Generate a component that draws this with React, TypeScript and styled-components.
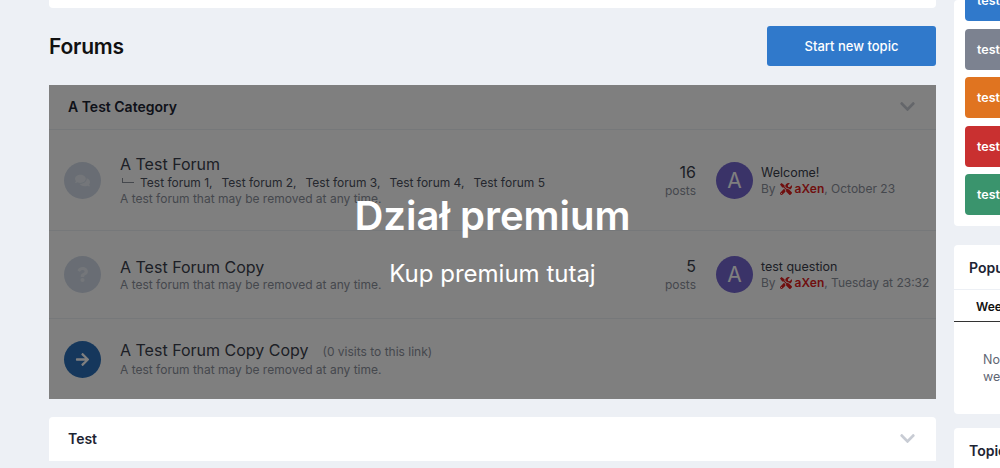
import React from "react";
import styled, { createGlobalStyle } from "styled-components";
import { FaArrowRight, FaChevronDown, FaComments, FaQuestion, FaTools } from "react-icons/fa";

const GlobalStyle = createGlobalStyle`
  html, body {
    margin: 0;
    height: 468px;
    overflow: hidden;
    background: #edf0f5;
    font-family: Inter, "Noto Sans", sans-serif;
    color: #1d2433;
  }
  * { box-sizing: border-box; }
`;

const Page = styled.div`
  display: grid;
  grid-template-columns: 887px 300px;
  column-gap: 18px;
  height: 468px;
  padding-left: 49px;
  overflow: hidden;
`;

const Main = styled.main`
  display: flex;
  flex-direction: column;
`;

const TopCard = styled.div`
  height: 8px;
  background: #fff;
  border-radius: 0 0 4px 4px;
`;

const Heading = styled.div`
  display: flex;
  align-items: center;
  justify-content: space-between;
  height: 77px;
  padding-bottom: 1px;
`;

const PageTitle = styled.h2`
  margin: 0;
  font-size: 21px;
  font-weight: 600;
  letter-spacing: -0.2px;
  color: #111;
`;

const StartButton = styled.button`
  width: 169px;
  height: 40px;
  border: 0;
  border-radius: 3px;
  background: #3079cb;
  color: #fff;
  font: 500 13px Inter, sans-serif;
`;

const Category = styled.section<{ $locked?: boolean }>`
  position: relative;
  background: #fff;
  border-radius: ${(p) => (p.$locked ? "0" : "4px 4px 0 0")};
  margin-bottom: 18px;
`;

const CategoryHeader = styled.div`
  display: flex;
  align-items: center;
  justify-content: space-between;
  height: 45px;
  padding: 0 20px 1px 19px;
  border-bottom: 1px solid #edf0f5;
`;

const CategoryTitle = styled.h3`
  margin: 0;
  font-size: 14px;
  font-weight: 600;
  color: #1d2433;
`;

const Chevron = styled(FaChevronDown)`
  width: 17px;
  height: 17px;
  color: #c8ccd4;
`;

const Row = styled.div<{ $height: number; $last?: boolean }>`
  display: grid;
  grid-template-columns: 36px 1fr 72px 220px;
  align-items: center;
  column-gap: 20px;
  height: ${(p) => p.$height}px;
  padding-left: 15px;
  border-bottom: ${(p) => (p.$last ? "0" : "1px solid #edf0f5")};
`;

const ForumIcon = styled.div<{ $active?: boolean }>`
  display: flex;
  align-items: center;
  justify-content: center;
  width: 37px;
  height: 37px;
  border-radius: 50%;
  background: ${(p) => (p.$active ? "#2a6fb8" : "#d2dbe8")};
  color: ${(p) => (p.$active ? "#fff" : "#e8edf4")};
  font-size: 15px;
`;

const ForumInfo = styled.div`
  display: flex;
  flex-direction: column;
  min-width: 0;
`;

const ForumTitle = styled.div`
  display: flex;
  align-items: baseline;
  font-size: 16px;
  line-height: 20px;
  color: #3a3f4c;
`;

const Visits = styled.span`
  margin-left: 14px;
  font-size: 12px;
  color: #8b909b;
`;

const SubForums = styled.div`
  display: flex;
  align-items: center;
  font-size: 12px;
  line-height: 17px;
  color: #4a4f5c;
`;

const SubForum = styled.span`
  margin-right: 9px;
`;

const Corner = styled.span`
  width: 12px;
  height: 5px;
  margin: -4px 6px 0 2px;
  border-left: 1px solid #8b909b;
  border-bottom: 1px solid #8b909b;
`;

const ForumDesc = styled.div`
  font-size: 12px;
  line-height: 16px;
  color: #8b909b;
`;

const Stats = styled.div`
  text-align: right;
  justify-self: end;
`;

const StatValue = styled.div`
  font-size: 16px;
  line-height: 20px;
  color: #3a3f4c;
`;

const StatLabel = styled.div`
  font-size: 12px;
  line-height: 17px;
  color: #8b909b;
`;

const LastPost = styled.div`
  display: flex;
  align-items: center;
  gap: 8px;
`;

const Avatar = styled.div`
  display: flex;
  align-items: center;
  justify-content: center;
  width: 37px;
  height: 37px;
  border-radius: 50%;
  background: #7466d0;
  color: #fff;
  font-size: 21px;
`;

const PostTitle = styled.div`
  font-size: 12.5px;
  line-height: 17px;
  color: #3a3f4c;
`;

const PostMeta = styled.div`
  display: flex;
  align-items: center;
  white-space: pre;
  font-size: 12px;
  line-height: 16px;
  color: #8b909b;
`;

const Author = styled.span`
  display: inline-flex;
  align-items: center;
  gap: 3px;
  margin-left: 4px;
  font-weight: 600;
  color: #e01e1e;
`;

const Overlay = styled.div`
  position: absolute;
  inset: 0;
  display: flex;
  flex-direction: column;
  align-items: center;
  padding-top: 103px;
  background: rgba(0, 0, 0, 0.5);
  color: #fff;
`;

const OverlayTitle = styled.div`
  font-size: 40px;
  line-height: 56px;
  font-weight: 600;
`;

const OverlayLink = styled.div`
  margin-top: 13px;
  font-size: 24px;
  line-height: 34px;
`;

const Sidebar = styled.aside`
  display: flex;
  flex-direction: column;
`;

const SideCard = styled.div<{ $height: number; $gap: number }>`
  flex: none;
  height: ${(p) => p.$height}px;
  margin-bottom: ${(p) => p.$gap}px;
  background: #fff;
  border-radius: 4px;
  overflow: hidden;
`;

const TagList = styled.div`
  display: flex;
  flex-direction: column;
  gap: 7.5px;
  margin-top: -20px;
  padding-left: 11px;
`;

const Tag = styled.div<{ $color: string }>`
  display: flex;
  align-items: center;
  height: 41px;
  padding-left: 12px;
  border-radius: 4px;
  background: ${(p) => p.$color};
  color: #fff;
  font-size: 12.5px;
  font-weight: 600;
`;

const SideTitle = styled.div`
  height: 45px;
  padding: 15px 15px 0;
  border-bottom: 1px solid #edf0f5;
  font-size: 14px;
  line-height: 16px;
  font-weight: 600;
`;

const SideTab = styled.div`
  height: 32px;
  padding: 9px 22px 0;
  border-bottom: 1px solid #333;
  font-size: 12px;
  line-height: 16px;
  font-weight: 600;
  color: #111;
`;

const SideEmpty = styled.div`
  padding: 29px 29px 0;
  font-size: 12.5px;
  line-height: 17px;
  color: #5f6673;
`;

const tags = ["#3079cb", "#7c8290", "#e07420", "#c93030", "#3a946d"];

const App = (): JSX.Element => {
  return (
    <Page>
      <GlobalStyle />
      <Main>
        <TopCard />
        <Heading>
          <PageTitle>Forums</PageTitle>
          <StartButton>Start new topic</StartButton>
        </Heading>
        <Category $locked>
          <CategoryHeader>
            <CategoryTitle>A Test Category</CategoryTitle>
            <Chevron />
          </CategoryHeader>
          <Row $height={101}>
            <ForumIcon>
              <FaComments />
            </ForumIcon>
            <ForumInfo>
              <ForumTitle>A Test Forum</ForumTitle>
              <SubForums>
                <Corner />
                <SubForum>Test forum 1,</SubForum>
                <SubForum>Test forum 2,</SubForum>
                <SubForum>Test forum 3,</SubForum>
                <SubForum>Test forum 4,</SubForum>
                <SubForum>Test forum 5</SubForum>
              </SubForums>
              <ForumDesc>A test forum that may be removed at any time.</ForumDesc>
            </ForumInfo>
            <Stats>
              <StatValue>16</StatValue>
              <StatLabel>posts</StatLabel>
            </Stats>
            <LastPost>
              <Avatar>A</Avatar>
              <div>
                <PostTitle>Welcome!</PostTitle>
                <PostMeta>
                  By<Author><FaTools size={12} />aXen</Author>, October 23
                </PostMeta>
              </div>
            </LastPost>
          </Row>
          <Row $height={88}>
            <ForumIcon>
              <FaQuestion />
            </ForumIcon>
            <ForumInfo>
              <ForumTitle>A Test Forum Copy</ForumTitle>
              <ForumDesc>A test forum that may be removed at any time.</ForumDesc>
            </ForumInfo>
            <Stats>
              <StatValue>5</StatValue>
              <StatLabel>posts</StatLabel>
            </Stats>
            <LastPost>
              <Avatar>A</Avatar>
              <div>
                <PostTitle>test question</PostTitle>
                <PostMeta>
                  By<Author><FaTools size={12} />aXen</Author>, Tuesday at 23:32
                </PostMeta>
              </div>
            </LastPost>
          </Row>
          <Row $height={80} $last>
            <ForumIcon $active>
              <FaArrowRight />
            </ForumIcon>
            <ForumInfo>
              <ForumTitle>
                A Test Forum Copy Copy
                <Visits>(0 visits to this link)</Visits>
              </ForumTitle>
              <ForumDesc>A test forum that may be removed at any time.</ForumDesc>
            </ForumInfo>
          </Row>
          <Overlay>
            <OverlayTitle>Dział premium</OverlayTitle>
            <OverlayLink>Kup premium tutaj</OverlayLink>
          </Overlay>
        </Category>
        <Category>
          <CategoryHeader>
            <CategoryTitle>Test</CategoryTitle>
            <Chevron />
          </CategoryHeader>
        </Category>
      </Main>
      <Sidebar>
        <SideCard $height={226} $gap={19}>
          <TagList>
            {tags.map((color) => (
              <Tag key={color} $color={color}>test</Tag>
            ))}
          </TagList>
        </SideCard>
        <SideCard $height={169} $gap={14}>
          <SideTitle>Popular</SideTitle>
          <SideTab>Week</SideTab>
          <SideEmpty>No topics this<br />week</SideEmpty>
        </SideCard>
        <SideCard $height={100} $gap={0}>
          <SideTitle>Topics</SideTitle>
        </SideCard>
      </Sidebar>
    </Page>
  );
};

export default App;
